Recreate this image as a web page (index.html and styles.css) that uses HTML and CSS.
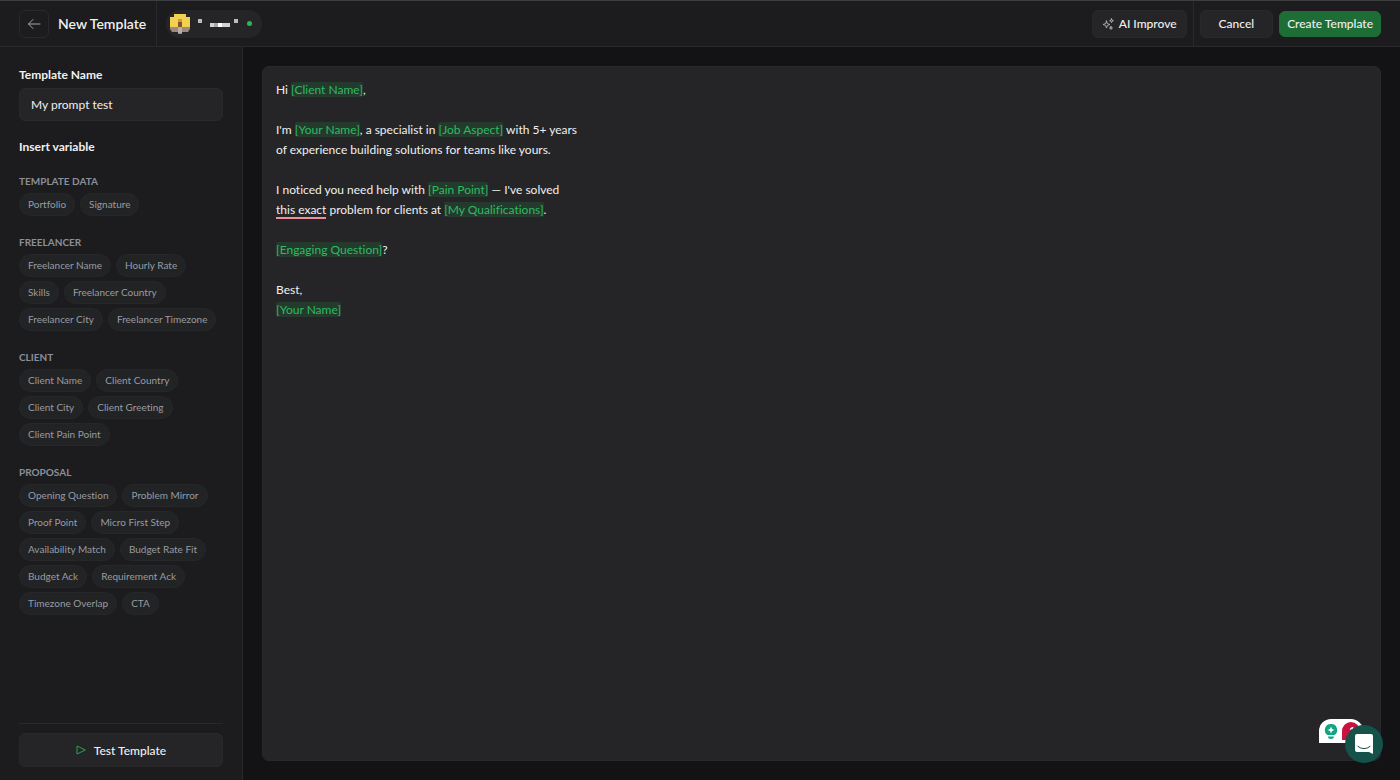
FILE: index.html
```html
<!DOCTYPE html>
<html lang="en">
<head>
    <meta charset="UTF-8">
    <meta name="viewport" content="width=device-width, initial-scale=1.0">
    <title>New Template</title>
    <link rel="stylesheet" href="styles.css">
</head>
<body>
    <!-- Top bar -->
    <header class="topbar">
        <div class="topbar-title">
            <button class="back-btn" type="button" aria-label="Back">
                <svg width="14" height="14" viewBox="0 0 14 14" fill="none" stroke="currentColor" stroke-linecap="round" stroke-linejoin="round"><path d="M13 7H1.500M6 2.500L1.500 7L6 11.500"/></svg>
            </button>
            <h1>New Template</h1>
        </div>
        <button class="account" type="button" aria-label="Account">
            <svg width="22" height="22" viewBox="0 0 22 22">
                <path fill="#f3d150" d="M5 1h12v3h4v10H1V4h4z"/>
                <path fill="#9c8b7c" d="M1 14h20v2l-2 3h-6v2H9v-2H3l-2-3z"/>
                <path fill="#c99a3a" d="M9 6h4v3H9z"/>
                <path fill="#8a4f2c" d="M9 9h4v5H9z"/>
                <path fill="#b9afa5" d="M9 14h4v6H9z"/>
            </svg>
            <svg width="42" height="14" viewBox="0 0 42 14" shape-rendering="crispEdges">
                <path fill="#bdbdbf" d="M0 2h4v4H0zM36 2h4v4h-4z"/>
                <path fill="#d2d2d4" d="M12 6h20v4H12z"/>
                <path fill="#a9a9ab" d="M16 6h4v4h-4z"/>
                <path fill="#fff" d="M20 6h4v4h-4z"/>
            </svg>
            <span class="status-dot"></span>
        </button>
        <div class="topbar-tools">
            <button class="btn" type="button">
                <svg class="icon-spark" width="12" height="12" viewBox="0 0 12 12" fill="none" stroke="currentColor" stroke-width="0.900" stroke-linejoin="round" stroke-linecap="round"><path d="M4.500 3L5.400 5.600L8 6.500L5.400 7.400L4.500 10L3.600 7.400L1 6.500L3.600 5.600Z"/><path d="M9.500 .8L10 2.200L11.400 2.700L10 3.200L9.500 4.600L9 3.200L7.600 2.700L9 2.200Z"/><path d="M9 8.500L9.400 9.600L10.500 10L9.400 10.400L9 11.500L8.600 10.400L7.500 10L8.600 9.600Z"/></svg>
                AI Improve
            </button>
        </div>
        <div class="topbar-actions">
            <button class="btn btn-cancel" type="button">Cancel</button>
            <button class="btn btn-primary" type="button">Create Template</button>
        </div>
    </header>

    <div class="workspace">
        <!-- Sidebar with template name and variables -->
        <aside class="sidebar">
            <label class="field-label" for="template-name">Template Name</label>
            <input class="text-input" id="template-name" type="text" value="My prompt test">

            <h2 class="variables-title">Insert variable</h2>

            <div class="groups">
                <section>
                    <h3>TEMPLATE DATA</h3>
                    <div class="chips">
                        <button type="button">Portfolio</button>
                        <button type="button">Signature</button>
                    </div>
                </section>
                <section>
                    <h3>FREELANCER</h3>
                    <div class="chips">
                        <button type="button">Freelancer Name</button>
                        <button type="button">Hourly Rate</button>
                        <button type="button">Skills</button>
                        <button type="button">Freelancer Country</button>
                        <button type="button">Freelancer City</button>
                        <button type="button">Freelancer Timezone</button>
                    </div>
                </section>
                <section>
                    <h3>CLIENT</h3>
                    <div class="chips">
                        <button type="button">Client Name</button>
                        <button type="button">Client Country</button>
                        <button type="button">Client City</button>
                        <button type="button">Client Greeting</button>
                        <button type="button">Client Pain Point</button>
                    </div>
                </section>
                <section>
                    <h3>PROPOSAL</h3>
                    <div class="chips">
                        <button type="button">Opening Question</button>
                        <button type="button">Problem Mirror</button>
                        <button type="button">Proof Point</button>
                        <button type="button">Micro First Step</button>
                        <button type="button">Availability Match</button>
                        <button type="button">Budget Rate Fit</button>
                        <button type="button">Budget Ack</button>
                        <button type="button">Requirement Ack</button>
                        <button type="button">Timezone Overlap</button>
                        <button type="button">CTA</button>
                    </div>
                </section>
            </div>

            <div class="sidebar-footer">
                <button class="btn btn-test" type="button">
                    <svg width="10" height="10" viewBox="0 0 10 10" fill="none" stroke="#22a651" stroke-linejoin="round"><path d="M1 1L9.300 5L1 9Z"/></svg>
                    Test Template
                </button>
            </div>
        </aside>

        <!-- Template editor -->
        <main class="editor-wrap">
            <div class="editor" contenteditable="true" spellcheck="false" role="textbox" aria-multiline="true" aria-label="Template text">
                <p>Hi <mark>[Client Name]</mark>,</p>
                <p>I'm <mark>[Your Name]</mark>, a specialist in <mark>[Job Aspect]</mark> with 5+ years<br>of experience building solutions for teams like yours.</p>
                <p>I noticed you need help with <mark>[Pain Point]</mark> — I've solved<br><span class="grammar">this exact</span> problem for clients at <mark>[My Qualifications]</mark>.</p>
                <p><mark>[Engaging Question]</mark>?</p>
                <p>Best,<br><mark>[Your Name]</mark></p>
            </div>
        </main>
    </div>

    <!-- Floating helpers -->
    <div class="grammar-widget">
        <svg width="44" height="24" viewBox="0 0 44 24">
            <path fill="#fff" d="M0 24V12A12 12 0 0 1 12 0H32A12 12 0 0 1 44 12V24Z"/>
            <path fill="#12a381" d="M12 5a6 6 0 0 0-3.500 11h7A6 6 0 0 0 12 5zM9 17.500h6a3 2.500 0 0 1-6 0z"/>
            <path fill="#fff" d="M12 7.500l1 2.500 2.500 1-2.500 1-1 2.500-1-2.500-2.500-1 2.500-1z"/>
            <path fill="#c9133e" d="M23 21V12a9 9 0 0 1 18 0v9z"/>
            <text class="grammar-count" x="30" y="16">1</text>
        </svg>
    </div>
    <button class="chat-btn" type="button" aria-label="Open chat">
        <svg width="18" height="20" viewBox="0 0 18 20"><path fill="#fff" d="M2 0h14a2 2 0 0 1 2 2v18l-4-2H2a2 2 0 0 1-2-2V2a2 2 0 0 1 2-2z"/><path d="M3 12.500Q9 17 15 12.500" fill="none" stroke="#14524a" stroke-linecap="round"/></svg>
    </button>
</body>
</html>
```

FILE: styles.css
```css
* {
    margin: 0;
    padding: 0;
    box-sizing: border-box;
}

body {
    display: flex;
    flex-direction: column;
    min-height: 100vh;
    background: #131315;
    color: #f0f0f1;
    font-family: Lato, "Liberation Sans", sans-serif;
    font-size: 12px;
    font-variant-ligatures: none;
}

button,
input {
    font: inherit;
    color: inherit;
}

button {
    cursor: pointer;
}

/* Top bar */
.topbar {
    display: flex;
    height: 47px;
    background: #1c1c1e;
    border-top: 1px solid #3c3e40;
    border-bottom: 1px solid #29292b;
}

.topbar-title,
.topbar-tools,
.topbar-actions {
    display: flex;
    align-items: center;
}

.topbar-title {
    gap: 9px;
    padding: 0 10px 0 19px;
    border-right: 1px solid #29292b;
}

.topbar-title h1 {
    font-size: 14px;
    font-weight: 600;
}

.back-btn {
    display: grid;
    place-items: center;
    width: 30px;
    height: 28px;
    background: #1c1c1e;
    border: 1px solid #29292b;
    border-radius: 6px;
    color: #a5a6aa;
}

.account {
    display: flex;
    align-items: center;
    gap: 7px;
    height: 28px;
    margin: auto 0 auto 9px;
    padding: 0 10px 0 3px;
    background: #252527;
    border: none;
    border-radius: 14px;
}

.status-dot {
    width: 5px;
    height: 5px;
    border-radius: 50%;
    background: #28b85c;
}

.topbar-tools {
    margin-left: auto;
    padding-right: 6px;
    border-right: 1px solid #29292b;
}

.topbar-actions {
    gap: 6px;
    padding: 0 19px 0 6px;
}

.btn {
    display: flex;
    align-items: center;
    justify-content: center;
    gap: 5px;
    height: 28px;
    padding: 0 9px;
    background: #252527;
    border: 1px solid #29292b;
    border-radius: 6px;
    font-size: 12px;
    font-weight: 500;
    white-space: nowrap;
}

.icon-spark {
    color: #b5b6ba;
}

.btn-cancel {
    padding: 0 18px;
}

.btn-primary {
    height: 26px;
    padding: 0 7px;
    background: #1f6d36;
    border-color: #1f6d36;
}

/* Layout */
.workspace {
    display: flex;
    flex: 1;
}

/* Sidebar */
.sidebar {
    display: flex;
    flex-direction: column;
    flex: 0 0 243px;
    padding: 20px 19px 13px;
    background: #1c1c1e;
    border-right: 1px solid #29292b;
}

.field-label,
.variables-title {
    font-size: 12px;
    font-weight: 700;
    line-height: 16px;
}

.text-input {
    width: 100%;
    height: 33px;
    margin-top: 5px;
    padding: 0 11px;
    background: #252527;
    border: 1px solid #29292b;
    border-radius: 6px;
    outline: none;
}

.variables-title {
    margin: 18px 0 20px;
}

.groups {
    display: flex;
    flex-direction: column;
    gap: 20px;
}

.groups h3 {
    margin-bottom: 5px;
    color: #8b8f99;
    font-size: 10px;
    font-weight: 700;
    line-height: 13px;
}

.chips {
    display: flex;
    flex-wrap: wrap;
    gap: 4px 5px;
}

.chips button {
    height: 23px;
    padding: 0 8px 1px;
    background: #222325;
    border: 1px solid #262729;
    border-radius: 12px;
    color: #989ba3;
    font-size: 10px;
}

.sidebar-footer {
    margin-top: auto;
    padding-top: 9px;
    border-top: 1px solid #29292b;
}

.btn-test {
    width: 100%;
    height: 34px;
    gap: 8px;
}

/* Editor */
.editor-wrap {
    display: flex;
    flex: 1;
    padding: 19px;
}

.editor {
    flex: 1;
    padding: 13px;
    background: #252527;
    border: 1px solid #29292b;
    border-radius: 7px;
    line-height: 20px;
    outline: none;
}

.editor p {
    margin-bottom: 20px;
}

.editor mark {
    background: #243a2d;
    border-radius: 2px;
    color: #2dba62;
}

.grammar {
    border-bottom: 2px solid #ee8d9c;
}

/* Floating helpers over the editor */
.grammar-widget {
    position: fixed;
    right: 37px;
    bottom: 37px;
    height: 24px;
}

.grammar-count {
    fill: #fff;
    font-size: 11px;
    font-weight: 700;
}

.chat-btn {
    position: fixed;
    right: 17px;
    bottom: 17px;
    display: grid;
    place-items: center;
    width: 38px;
    height: 38px;
    background: #14524a;
    border: none;
    border-radius: 50%;
}
```
